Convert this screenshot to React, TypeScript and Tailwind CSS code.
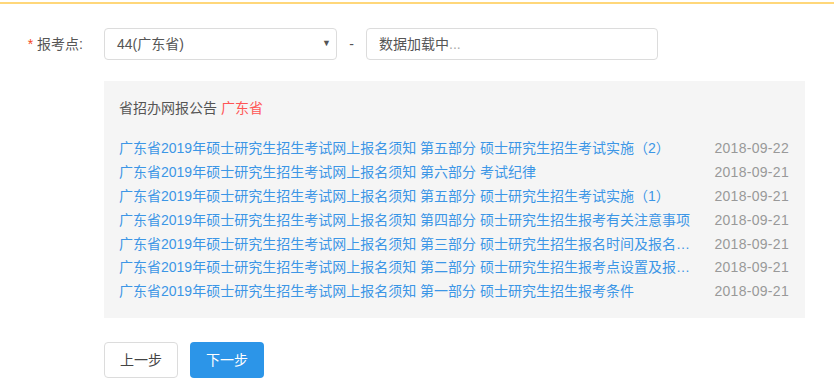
import React from 'react';

const notices = [
  { title: '广东省2019年硕士研究生招生考试网上报名须知 第五部分 硕士研究生招生考试实施（2）', date: '2018-09-22' },
  { title: '广东省2019年硕士研究生招生考试网上报名须知 第六部分 考试纪律', date: '2018-09-21' },
  { title: '广东省2019年硕士研究生招生考试网上报名须知 第五部分 硕士研究生招生考试实施（1）', date: '2018-09-21' },
  { title: '广东省2019年硕士研究生招生考试网上报名须知 第四部分 硕士研究生招生报考有关注意事项', date: '2018-09-21' },
  { title: '广东省2019年硕士研究生招生考试网上报名须知 第三部分 硕士研究生招生报名时间及报名地点', date: '2018-09-21' },
  { title: '广东省2019年硕士研究生招生考试网上报名须知 第二部分 硕士研究生招生报考点设置及报考点要求', date: '2018-09-21' },
  { title: '广东省2019年硕士研究生招生考试网上报名须知 第一部分 硕士研究生招生报考条件', date: '2018-09-21' },
];

export default function App() {
  return (
    <div
      className="w-[834px] h-[391px] bg-white text-[14px] text-[#555]"
      style={{ fontFamily: '"Liberation Sans", Arial, "Noto Sans CJK SC", sans-serif' }}
    >
      {/* top line */}
      <div className="h-[2px]" />
      <div className="h-[2px] bg-[#ffd77a]" />

      {/* 报考点 row */}
      <div className="flex items-center mt-[24px] h-[32px]">
        <div className="w-[104px] flex items-center justify-end pr-[21px]">
          <span className="text-[#f5461d] mr-[4px] leading-none">*</span>
          <span className="text-[#555]">报考点:</span>
        </div>
        <div className="relative w-[233px] h-[32px] border border-[#dcdcdc] rounded-[4px] flex items-center pl-[12px]">
          <span className="text-[#555]">44(广东省)</span>
          <span className="absolute right-[5px] top-[10px] text-[9px] text-[#555] leading-none">▼</span>
        </div>
        <span className="w-[29px] text-center text-[#555]">-</span>
        <div className="w-[292px] h-[32px] border border-[#dcdcdc] rounded-[4px] flex items-center pl-[12px] text-[#555]">
          数据加载中<span className="text-[#aaa]">...</span>
        </div>
      </div>

      {/* notice panel */}
      <div className="ml-[104px] mt-[21px] w-[701px] h-[237px] bg-[#f5f5f5] pt-[16px] px-[15px]">
        <div className="h-[22px] leading-[22px] text-[#555]">
          省招办网报公告 <span className="text-[#f55]">广东省</span>
        </div>
        <ul className="mt-[18px]">
          {notices.map((n, i) => (
            <li key={i} className="flex items-center h-[23.8px]">
              <a className="block w-[574px] overflow-hidden whitespace-nowrap text-ellipsis text-[#3c96e6] cursor-pointer">
                {n.title}
              </a>
              <span className="ml-auto pr-[1px] tracking-[0.3px] text-[#999]">{n.date}</span>
            </li>
          ))}
        </ul>
      </div>

      {/* buttons */}
      <div className="flex ml-[104px] mt-[24px] gap-[12px]">
        <button className="w-[74px] h-[36px] border border-[#dcdcdc] rounded-[4px] bg-white text-[#444]">
          上一步
        </button>
        <button className="w-[74px] h-[36px] rounded-[4px] bg-[#2c95e8] text-white">下一步</button>
      </div>
    </div>
  );
}
